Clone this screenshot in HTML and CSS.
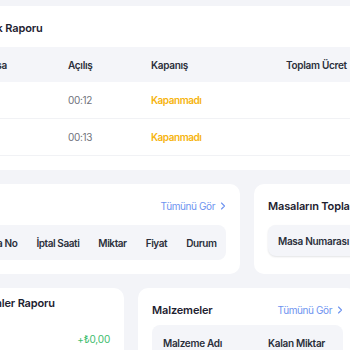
FILE: index.html
```html
<!DOCTYPE html>
<html lang="tr">
<head>
<meta charset="utf-8">
<link rel="stylesheet" href="styles.css">
</head>
<body>
<div class="page">
  <div class="row">
    <section class="card card-daily">
      <h2 class="card-title">Günlük Raporu</h2>
      <div class="t-head cols-daily">
        <span class="cell">Masa</span>
        <span class="cell">Açılış</span>
        <span class="cell">Kapanış</span>
        <span class="cell">Toplam Ücret</span>
      </div>
      <div class="t-row cols-daily">
        <span class="cell"></span>
        <span class="cell muted">00:12</span>
        <span class="cell warn">Kapanmadı</span>
        <span class="cell"></span>
      </div>
      <div class="t-row cols-daily">
        <span class="cell"></span>
        <span class="cell muted">00:13</span>
        <span class="cell warn">Kapanmadı</span>
        <span class="cell"></span>
      </div>
    </section>
  </div>

  <div class="row">
    <section class="card card-cancel">
      <div class="card-top">
        <h2 class="card-title">İptal</h2>
        <a class="see-all">Tümünü Gör <svg class="chev" width="6" height="8" viewBox="0 0 6 8"><path d="M1.5 1 L4.5 4 L1.5 7" fill="none" stroke="currentColor" stroke-width="1.1" stroke-linecap="round" stroke-linejoin="round"/></svg></a>
      </div>
      <div class="t-head t-head-end">
        <span class="cell">Masa No</span>
        <span class="cell">İptal Saati</span>
        <span class="cell">Miktar</span>
        <span class="cell">Fiyat</span>
        <span class="cell">Durum</span>
      </div>
    </section>
    <section class="card card-tables">
      <h2 class="card-title">Masaların Toplam Ücretleri</h2>
      <div class="t-head t-head-shadow">
        <span class="cell">Masa Numarası</span>
        <span class="cell">Toplam</span>
      </div>
    </section>
  </div>

  <div class="row">
    <section class="card card-pay">
      <h2 class="card-title">İndirimler Raporu</h2>
      <div class="pay-line">
        <span class="pay-label">Nakit</span>
        <span class="plus">+₺0,00</span>
      </div>
    </section>
    <section class="card card-mat">
      <div class="card-top">
        <h2 class="card-title">Malzemeler</h2>
        <a class="see-all">Tümünü Gör <svg class="chev" width="6" height="8" viewBox="0 0 6 8"><path d="M1.5 1 L4.5 4 L1.5 7" fill="none" stroke="currentColor" stroke-width="1.1" stroke-linecap="round" stroke-linejoin="round"/></svg></a>
      </div>
      <div class="t-head cols-mat">
        <span class="cell">Malzeme Adı</span>
        <span class="cell">Kalan Miktar</span>
      </div>
    </section>
  </div>
</div>
</body>
</html>
```

FILE: styles.css
```css
* { box-sizing: border-box; }
html, body {
  margin: 0;
  padding: 0;
  background: #f3f4f8;
  overflow: hidden;
  width: 350px;
  height: 350px;
}
body {
  font-family: Inter, "Noto Sans", sans-serif;
  color: #1f2330;
}
.page {
  margin-left: -48px;
  padding-top: 6px;
  display: flex;
  flex-direction: column;
  gap: 14px;
  width: 620px;
}
.row {
  display: flex;
  gap: 14px;
  align-items: stretch;
}
.card {
  background: #fff;
  border-radius: 10px;
  padding: 14px;
  flex: none;
}
.card-title {
  margin: 0 0 11px;
  font-size: 11px;
  line-height: 16px;
  font-weight: 600;
  letter-spacing: -0.15px;
  color: #1d2130;
  white-space: nowrap;
}
.card-top {
  display: flex;
  justify-content: space-between;
  align-items: center;
  margin-bottom: 11px;
}
.card-top .card-title { margin: 0; }
.see-all {
  font-size: 10px;
  line-height: 16px;
  color: #6e93f0;
  letter-spacing: -0.4px;
  display: flex;
  align-items: center;
  gap: 5px;
}
.chev { display: block; }

.t-head {
  background: #f4f5f9;
  border-radius: 8px;
  height: 35px;
  display: flex;
  align-items: center;
  font-size: 10px;
  font-weight: 600;
  letter-spacing: -0.3px;
  color: #2b2f3a;
  white-space: nowrap;
}
.t-row {
  height: 37px;
  display: flex;
  align-items: center;
  font-size: 10px;
  border-bottom: 1px solid #f1f2f5;
  white-space: nowrap;
}
.cell { padding: 0 10px; flex: none; }
.muted { color: #70737c; letter-spacing: -0.3px; }
.warn { color: #f6b40e; font-weight: 600; letter-spacing: -0.45px; }

/* daily report */
.card-daily { width: 620px; }
.cols-daily { padding-left: 6px; }
.cols-daily .cell:nth-child(1) { width: 86px; }
.cols-daily .cell:nth-child(2) { width: 83px; }
.cols-daily .cell:nth-child(3) { width: 135px; }

/* cancellations */
.card-cancel { width: 288px; }
.t-head-end { justify-content: flex-end; letter-spacing: -0.42px; }
.t-head-end .cell { padding: 0 9.5px; }

/* tables */
.card-tables { width: 260px; }
.t-head-shadow {
  height: 31px;
  box-shadow: 0 1px 2px rgba(20, 25, 40, 0.12);
}

/* payments */
.card-pay { width: 172px; padding-top: 7px; }
.pay-line {
  display: flex;
  justify-content: space-between;
  align-items: center;
  margin-top: 22px;
  font-size: 10px;
}
.pay-label { color: #70737c; }
.plus { color: #3dbd6e; font-weight: 400; letter-spacing: -0.2px; }

/* materials */
.card-mat { width: 219px; padding-bottom: 20px; }
.card-mat .card-top { margin-bottom: 7px; }
.cols-mat .cell:nth-child(1) { width: 106px; padding-left: 11px; }
```
